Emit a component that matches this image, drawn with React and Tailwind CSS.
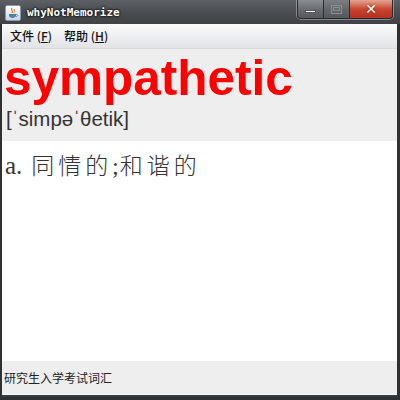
export default function App() {
  return (
    <div className="w-[400px] h-[400px] flex flex-col overflow-hidden bg-[#3a3b3d]" style={{ fontFamily: '"Liberation Sans", "Noto Sans CJK SC", sans-serif' }}>
      {/* Title bar */}
      <div className="relative h-[24px] shrink-0 bg-gradient-to-b from-[#5d6166] via-[#4a4d51] to-[#404245] flex items-center">
        <div className="ml-[5px] mt-[1px] w-[16px] h-[16px] rounded-[2px] bg-gradient-to-b from-[#ffffff] to-[#c9d6e6] border border-[#8a9bb0] flex items-center justify-center">
          <svg width="12" height="12" viewBox="0 0 12 12">
            <path d="M5 1 C3 3 7 4 5 6" stroke="#e8761c" strokeWidth="1.2" fill="none" />
            <path d="M7.5 2 C6 3.5 8.5 4 7 5.5" stroke="#e8761c" strokeWidth="1" fill="none" />
            <path d="M2 7 H9 V8.5 C9 10 7.5 11 5.5 11 C3.5 11 2 10 2 8.5 Z" fill="#5382a1" />
            <path d="M9 7.5 C11 7.5 11 9.5 9 9.5" stroke="#5382a1" strokeWidth="0.9" fill="none" />
          </svg>
        </div>
        <span className="ml-[6px] text-[11px] font-bold text-white leading-none" style={{ fontFamily: '"DejaVu Sans Mono", monospace', textShadow: '0 0 3px #000, 0 0 2px #000' }}>whyNotMemorize</span>
        {/* window buttons */}
        <div className="absolute top-0 left-[297px] flex h-[19px] rounded-b-[4px] border border-t-0 border-[#2a2c2e] overflow-hidden shadow-[0_0_0_1px_rgba(255,255,255,0.35)]">
          <div className="w-[26px] h-full bg-gradient-to-b from-[#8b8f94] via-[#6a6e73] to-[#55595e] border-r border-[#2a2c2e] flex items-center justify-center">
            <div className="w-[11px] h-[3px] bg-white border border-[#555] mt-[4px]"></div>
          </div>
          <div className="w-[26px] h-full bg-gradient-to-b from-[#7c8085] via-[#64686c] to-[#54575b] border-r border-[#2a2c2e] flex items-center justify-center">
            <div className="w-[11px] h-[9px] border border-[#8a8e92] flex items-start justify-center">
              <div className="w-[7px] h-[4px] border border-[#8a8e92] mt-[1px]"></div>
            </div>
          </div>
          <div className="w-[42px] h-full bg-gradient-to-b from-[#e0a593] via-[#c8452f] to-[#b23120] flex items-center justify-center">
            <span className="text-white text-[14px] font-bold leading-none" style={{ fontFamily: '"DejaVu Sans", sans-serif', textShadow: '0 0 2px #5a1a10' }}>✕</span>
          </div>
        </div>
      </div>
      <div className="flex flex-1">
        <div className="w-[2px] bg-[#2f3032]"></div>
        <div className="w-[395px] flex flex-col">
          {/* Menu bar */}
          <div className="h-[25px] shrink-0 bg-gradient-to-b from-[#fbfbfb] to-[#e2e3e5] border-b border-[#d9d9d9] flex items-center text-[12px] text-[#111]" style={{ fontFamily: '"Noto Sans CJK SC", sans-serif' }}>
            <span className="ml-[8px] font-medium">文件 (<span className="underline">F</span>)</span>
            <span className="ml-[12px] font-medium">帮助 (<span className="underline">H</span>)</span>
          </div>
          {/* Word panel */}
          <div className="h-[92px] shrink-0 bg-[#eeeeee] flex flex-col">
            <div className="ml-[2px] mt-[-1px] text-[49.5px] font-bold text-[#ff0000] leading-[60px]" style={{ fontFamily: '"Liberation Sans", Arial, sans-serif' }}>sympathetic</div>
            <div className="ml-[4px] mt-[-2px] text-[20.5px] text-[#333] leading-[26px]" style={{ fontFamily: '"Liberation Sans", "DejaVu Sans", sans-serif' }}>[ˈsimpəˈθetik]</div>
          </div>
          {/* Meaning */}
          <div className="h-[220px] shrink-0 bg-white">
            <div className="ml-[3px] mt-[8px] flex items-baseline text-[#333] leading-[30px]">
              <span className="text-[25px]" style={{ fontFamily: '"Liberation Serif", serif' }}>a.</span>
              <span className="ml-[9px] text-[23px] tracking-[4px] font-light" style={{ fontFamily: '"Noto Sans CJK SC", sans-serif' }}>同情的<span className="tracking-[1px]" style={{ fontFamily: '"Liberation Serif", serif' }}>;</span>和谐的</span>
            </div>
          </div>
          {/* Status */}
          <div className="h-[34px] shrink-0 bg-[#eeeeee] flex items-center border-b border-[#fafafa]">
            <span className="ml-[2px] text-[12px] text-[#222]" style={{ fontFamily: '"Noto Sans CJK SC", sans-serif' }}>研究生入学考试词汇</span>
          </div>
        </div>
        <div className="flex-1 bg-[#2f3032]"></div>
      </div>
      <div className="h-[3px] shrink-0 bg-[#2f3032]"></div>
    </div>
  );
}
